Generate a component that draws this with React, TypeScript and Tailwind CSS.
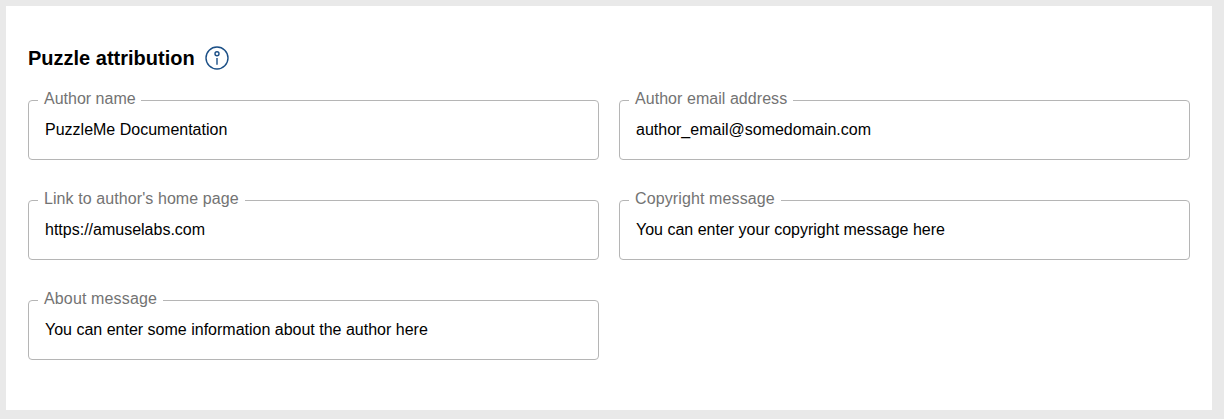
type FieldProps = {
  label: string;
  value: string;
  labelClass: string;
};

const fields: FieldProps[] = [
  { label: "Author name", value: "PuzzleMe Documentation", labelClass: "w-[103px]" },
  { label: "Author email address", value: "author_email@somedomain.com", labelClass: "w-[164px] tracking-[0.05px]" },
  { label: "Link to author's home page", value: "https://amuselabs.com", labelClass: "w-[207px] tracking-[0.085px]" },
  { label: "Copyright message", value: "You can enter your copyright message here", labelClass: "w-[152px] tracking-[0.12px]" },
  { label: "About message", value: "You can enter some information about the author here", labelClass: "w-[125px] tracking-[0.14px]" },
];

// Field is an outlined box whose label sits in a gap of the top border.
function Field({ label, value, labelClass }: FieldProps) {
  return (
    <div className="relative flex h-[60px] items-center rounded border border-[#b5b5b5] px-4">
      <span
        className={`absolute -top-3 left-[9px] h-5 whitespace-nowrap bg-white pl-1.5 text-base leading-5 text-[#737373] ${labelClass}`}
      >
        {label}
      </span>
      <span className="whitespace-nowrap text-base leading-5 text-black">{value}</span>
    </div>
  );
}

function InfoIcon() {
  return (
    <svg width="24" height="24" viewBox="0 0 24 24" fill="none" stroke="#1b4f86" strokeWidth="1.4">
      <circle cx="12" cy="12" r="11" />
      <circle cx="12" cy="7.7" r="2" />
      <path d="M12 12v6.8" />
    </svg>
  );
}

export default function App() {
  return (
    <div className="h-[419px] bg-[#e9e9e9] pt-1.5 pr-3 pb-[9px] pl-1.5 font-['Liberation_Sans',Arial,sans-serif]">
      <section className="h-full bg-white px-[22px] pt-10">
        <div className="mb-[30px] flex h-6 items-center gap-2.5">
          <h2 className="text-xl font-bold text-black">Puzzle attribution</h2>
          <InfoIcon />
        </div>
        <div className="grid grid-cols-[571px_571px] gap-x-5 gap-y-10">
          {fields.map((f) => (
            <Field key={f.label} {...f} />
          ))}
        </div>
      </section>
    </div>
  );
}
